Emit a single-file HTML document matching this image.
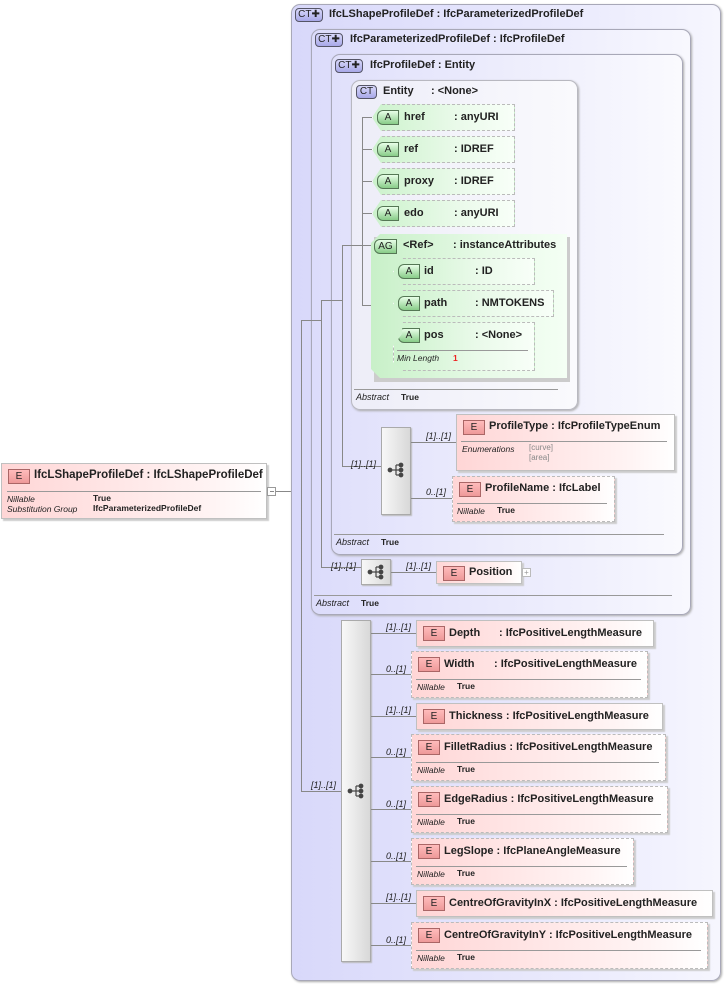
<!DOCTYPE html>
<html><head><meta charset="utf-8"><style>
*{box-sizing:border-box;margin:0;padding:0}
body{width:724px;height:984px;background:#fff;position:relative;overflow:hidden;font-family:"Liberation Sans",sans-serif;font-size:11px;color:#222}
div{position:absolute}
.ct{border:1px solid #a8a8b8;border-radius:9px;background:linear-gradient(90deg,#d8d8fa,#ececfd 70%,#f6f6fe);box-shadow:1px 1px 2px #aaa}
.ent{border:1px solid #b8b8c0;border-radius:9px;background:linear-gradient(90deg,#ededf8,#fafafd);box-shadow:1px 1px 2px #aaa}
.bdg{height:14px;border:1px solid #556;border-radius:4px;background:linear-gradient(#d8d8fa,#a8a8e8);font-size:10px;text-align:center;line-height:12px;font-weight:normal;color:#222}
.t{font-weight:bold;white-space:nowrap;font-size:11px}
.el{background:linear-gradient(90deg,#ffd6d6,#fff4f4 80%,#fff);border:1px solid #c0c0c0;box-shadow:2px 2px 1px #ccc}
.el.d{border:1px dashed #bbb}
.eb{left:6px;top:5px;width:22px;height:15px;border:1px solid #a66;background:linear-gradient(#fbb,#e99);font-size:10px;text-align:center;line-height:13px}
.sep{height:1px;background:#999}
.it{font-style:italic;font-size:8.5px}
.b8{font-weight:bold;font-size:8.5px}
.at{background:linear-gradient(90deg,#ccf2cc,#eafaea 60%,#f8fff8);border:1px dashed #bbb;box-shadow:1px 1px 1px #ddd;clip-path:polygon(9px 0,100% 0,100% 100%,9px 100%,0 50%);}
.ab{left:4px;top:5px;width:22px;height:15px;border:1px solid #575;border-radius:6px 0 0 6px;background:linear-gradient(#e8ffe8,#8c8);font-size:10px;text-align:center;line-height:13px}
.h{height:1px;background:#888}
.v{width:1px;background:#888}
.seq{border:1px solid #aaa;background:linear-gradient(90deg,#f8f8f8,#d8d8d8);box-shadow:1px 1px 1px #bbb}
.m{font-style:italic;font-size:9px}
</style></head><body>

<div class="el" style="left:1px;top:463px;width:266px;height:56px">
<div class="eb">E</div><div class="t" style="left:32px;top:5px;font-size:11.5px">IfcLShapeProfileDef : IfcLShapeProfileDef</div>
<div class="sep" style="left:5px;top:27px;width:254px"></div>
<div class="it" style="left:5px;top:30px">Nillable</div><div class="b8" style="left:91px;top:29px">True</div>
<div class="it" style="left:5px;top:40px">Substitution Group</div><div class="b8" style="left:91px;top:39px">IfcParameterizedProfileDef</div>
</div>
<div style="left:267px;top:487px;width:9px;height:9px;border:1px solid #999;background:#fff"></div>
<div class="h" style="left:270px;top:491px;width:4px"></div>
<div class="h" style="left:276px;top:491px;width:16px"></div>

<div class="ct" style="left:291px;top:4px;width:430px;height:977px"></div>
<div class="bdg" style="left:295px;top:8px;width:28px">CT✚</div>
<div class="t" style="left:329px;top:8px">IfcLShapeProfileDef : IfcParameterizedProfileDef</div>

<div class="ct" style="left:311px;top:29px;width:380px;height:586px;background:linear-gradient(90deg,#dcdcfb,#efeffd 70%,#f8f8fe)"></div>
<div class="bdg" style="left:315px;top:33px;width:28px">CT✚</div>
<div class="t" style="left:350px;top:33px">IfcParameterizedProfileDef : IfcProfileDef</div>
<div class="sep" style="left:314px;top:595px;width:358px"></div>
<div class="it" style="left:316px;top:598px;font-size:9px">Abstract</div><div class="b8" style="left:361px;top:598px">True</div>

<div class="ct" style="left:331px;top:54px;width:352px;height:501px;background:linear-gradient(90deg,#e0e0fb,#f2f2fd 70%,#fafafe)"></div>
<div class="bdg" style="left:335px;top:59px;width:28px">CT✚</div>
<div class="t" style="left:370px;top:59px">IfcProfileDef : Entity</div>
<div class="sep" style="left:334px;top:534px;width:330px"></div>
<div class="it" style="left:336px;top:537px;font-size:9px">Abstract</div><div class="b8" style="left:381px;top:537px">True</div>

<div class="ent" style="left:351px;top:80px;width:227px;height:330px"></div>
<div class="bdg" style="left:356px;top:85px;width:21px">CT</div>
<div class="t" style="left:383px;top:85px">Entity</div><div class="t" style="left:431px;top:85px">: &lt;None&gt;</div>
<div class="sep" style="left:354px;top:389px;width:204px"></div>
<div class="it" style="left:356px;top:392px;font-size:9px">Abstract</div><div class="b8" style="left:401px;top:392px">True</div>

<div class="v" style="left:301px;top:320px;height:472px"></div>
<div class="h" style="left:301px;top:320px;width:21px"></div>
<div class="v" style="left:321px;top:300px;height:268px"></div>
<div class="h" style="left:321px;top:300px;width:21px"></div>
<div class="v" style="left:342px;top:245px;height:221px"></div>
<div class="h" style="left:342px;top:245px;width:30px"></div>
<div class="v" style="left:362px;top:117px;height:188px"></div>
<div class="h" style="left:362px;top:117px;width:10px"></div>
<div class="h" style="left:362px;top:149px;width:10px"></div>
<div class="h" style="left:362px;top:181px;width:10px"></div>
<div class="h" style="left:362px;top:213px;width:10px"></div>
<div class="h" style="left:362px;top:305px;width:31px"></div>
<div class="v" style="left:381px;top:271px;height:76px"></div>
<div class="h" style="left:381px;top:271px;width:12px"></div>
<div class="h" style="left:381px;top:346px;width:12px"></div>
<div class="h" style="left:342px;top:466px;width:39px"></div>
<div class="h" style="left:321px;top:567px;width:40px"></div>
<div class="h" style="left:301px;top:791px;width:40px"></div>

<div class="at" style="left:372px;top:104px;width:143px;height:27px"><div class="ab">A</div><div class="t" style="left:31px;top:6px">href</div><div class="t" style="left:81px;top:6px">: anyURI</div></div>
<div class="at" style="left:372px;top:136px;width:143px;height:27px"><div class="ab">A</div><div class="t" style="left:31px;top:6px">ref</div><div class="t" style="left:81px;top:6px">: IDREF</div></div>
<div class="at" style="left:372px;top:168px;width:143px;height:27px"><div class="ab">A</div><div class="t" style="left:31px;top:6px">proxy</div><div class="t" style="left:81px;top:6px">: IDREF</div></div>
<div class="at" style="left:372px;top:200px;width:143px;height:27px"><div class="ab">A</div><div class="t" style="left:31px;top:6px">edo</div><div class="t" style="left:81px;top:6px">: anyURI</div></div>

<div style="left:374px;top:237px;width:196px;height:145px;background:#ccc"></div>
<div style="left:371px;top:234px;width:196px;height:144px;background:linear-gradient(90deg,#c8f0c8,#e8fae8 60%,#f4fff4);clip-path:polygon(9px 0,100% 0,100% 100%,9px 100%,0 calc(100% - 9px),0 9px)"></div>
<div class="ab" style="left:374px;top:239px;width:23px">AG</div>
<div class="t" style="left:403px;top:239px">&lt;Ref&gt;</div><div class="t" style="left:453px;top:239px">: instanceAttributes</div>
<div class="at" style="left:393px;top:258px;width:142px;height:27px"><div class="ab">A</div><div class="t" style="left:30px;top:6px">id</div><div class="t" style="left:81px;top:6px">: ID</div></div>
<div class="at" style="left:393px;top:290px;width:161px;height:27px"><div class="ab">A</div><div class="t" style="left:30px;top:6px">path</div><div class="t" style="left:81px;top:6px">: NMTOKENS</div></div>
<div class="at" style="left:393px;top:322px;width:142px;height:49px;clip-path:polygon(9px 0,100% 0,100% 100%,9px 100%,0 calc(100% - 9px),0 24px,9px 12px)"><div class="ab">A</div><div class="t" style="left:30px;top:6px">pos</div><div class="t" style="left:81px;top:6px">: &lt;None&gt;</div>
<div class="sep" style="left:3px;top:27px;width:131px"></div><div class="it" style="left:3px;top:30px">Min Length</div><div class="b8" style="left:59px;top:30px;color:#e22">1</div></div>

<div class="seq" style="left:381px;top:427px;width:30px;height:88px"></div>
<div class="m" style="left:351px;top:459px">[1]..[1]</div>
<div class="h" style="left:411px;top:442px;width:45px"></div>
<div class="h" style="left:411px;top:498px;width:41px"></div>
<div class="m" style="left:426px;top:431px">[1]..[1]</div>
<div class="m" style="left:426px;top:487px">0..[1]</div>
<div class="el" style="left:456px;top:414px;width:219px;height:57px"><div class="eb">E</div><div class="t" style="left:32px;top:5px">ProfileType : IfcProfileTypeEnum</div>
<div class="sep" style="left:4px;top:26px;width:206px"></div><div class="it" style="left:5px;top:29px">Enumerations</div><div style="left:72px;top:28px;font-size:8px;color:#888;line-height:10px">[curve]<br>[area]</div></div>
<div class="el d" style="left:452px;top:476px;width:163px;height:46px"><div class="eb">E</div><div class="t" style="left:32px;top:5px">ProfileName : IfcLabel</div>
<div class="sep" style="left:4px;top:26px;width:150px"></div><div class="it" style="left:4px;top:29px">Nillable</div><div class="b8" style="left:44px;top:28px">True</div></div>

<div class="seq" style="left:361px;top:559px;width:30px;height:26px"></div>
<div class="m" style="left:331px;top:561px">[1]..[1]</div>
<div class="h" style="left:391px;top:572px;width:45px"></div>
<div class="m" style="left:406px;top:561px">[1]..[1]</div>
<div class="el" style="left:436px;top:561px;width:86px;height:23px"><div class="eb" style="top:4px">E</div><div class="t" style="left:32px;top:4px">Position</div></div>
<div style="left:522px;top:568px;width:9px;height:9px;border:1px solid #bbb;background:#fff;font-size:8px;line-height:7px;text-align:center;color:#999">+</div>

<div class="seq" style="left:341px;top:620px;width:30px;height:342px"></div>
<div class="m" style="left:311px;top:780px">[1]..[1]</div>
<div class="h" style="left:371px;top:633px;width:45px"></div>
<div class="h" style="left:371px;top:674px;width:40px"></div>
<div class="h" style="left:371px;top:716px;width:45px"></div>
<div class="h" style="left:371px;top:757px;width:40px"></div>
<div class="h" style="left:371px;top:809px;width:40px"></div>
<div class="h" style="left:371px;top:861px;width:40px"></div>
<div class="h" style="left:371px;top:903px;width:45px"></div>
<div class="h" style="left:371px;top:945px;width:40px"></div>
<div class="m" style="left:386px;top:622px">[1]..[1]</div>
<div class="m" style="left:386px;top:664px">0..[1]</div>
<div class="m" style="left:386px;top:705px">[1]..[1]</div>
<div class="m" style="left:386px;top:747px">0..[1]</div>
<div class="m" style="left:386px;top:799px">0..[1]</div>
<div class="m" style="left:386px;top:851px">0..[1]</div>
<div class="m" style="left:386px;top:892px">[1]..[1]</div>
<div class="m" style="left:386px;top:935px">0..[1]</div>

<div class="el" style="left:416px;top:620px;width:238px;height:27px"><div class="eb">E</div><div class="t" style="left:32px;top:6px">Depth</div><div class="t" style="left:82px;top:6px">: IfcPositiveLengthMeasure</div></div>
<div class="el d" style="left:411px;top:651px;width:237px;height:47px"><div class="eb">E</div><div class="t" style="left:32px;top:6px">Width</div><div class="t" style="left:82px;top:6px">: IfcPositiveLengthMeasure</div><div class="sep" style="left:4px;top:27px;width:225px"></div><div class="it" style="left:5px;top:30px">Nillable</div><div class="b8" style="left:45px;top:29px">True</div></div>
<div class="el" style="left:416px;top:703px;width:247px;height:27px"><div class="eb">E</div><div class="t" style="left:32px;top:6px">Thickness : IfcPositiveLengthMeasure</div></div>
<div class="el d" style="left:411px;top:734px;width:255px;height:47px"><div class="eb">E</div><div class="t" style="left:32px;top:6px">FilletRadius : IfcPositiveLengthMeasure</div><div class="sep" style="left:4px;top:27px;width:243px"></div><div class="it" style="left:5px;top:30px">Nillable</div><div class="b8" style="left:45px;top:29px">True</div></div>
<div class="el d" style="left:411px;top:786px;width:257px;height:47px"><div class="eb">E</div><div class="t" style="left:32px;top:6px">EdgeRadius : IfcPositiveLengthMeasure</div><div class="sep" style="left:4px;top:27px;width:245px"></div><div class="it" style="left:5px;top:30px">Nillable</div><div class="b8" style="left:45px;top:29px">True</div></div>
<div class="el d" style="left:411px;top:838px;width:223px;height:47px"><div class="eb">E</div><div class="t" style="left:32px;top:6px">LegSlope : IfcPlaneAngleMeasure</div><div class="sep" style="left:4px;top:27px;width:211px"></div><div class="it" style="left:5px;top:30px">Nillable</div><div class="b8" style="left:45px;top:29px">True</div></div>
<div class="el" style="left:416px;top:890px;width:297px;height:27px"><div class="eb">E</div><div class="t" style="left:32px;top:6px">CentreOfGravityInX : IfcPositiveLengthMeasure</div></div>
<div class="el d" style="left:411px;top:922px;width:297px;height:47px"><div class="eb">E</div><div class="t" style="left:32px;top:6px">CentreOfGravityInY : IfcPositiveLengthMeasure</div><div class="sep" style="left:4px;top:27px;width:285px"></div><div class="it" style="left:5px;top:30px">Nillable</div><div class="b8" style="left:45px;top:29px">True</div></div>

<svg style="position:absolute;left:0;top:0" width="724" height="984">
<g fill="#444" stroke="#444" stroke-width="1.2">
<g transform="translate(388,463)"><circle cx="2" cy="7" r="1.8"/><line x1="2" y1="7" x2="8" y2="7"/><line x1="8" y1="2" x2="8" y2="12"/><line x1="8" y1="2" x2="12" y2="2"/><line x1="8" y1="7" x2="12" y2="7"/><line x1="8" y1="12" x2="12" y2="12"/><circle cx="13" cy="2" r="1.8"/><circle cx="13" cy="7" r="1.8"/><circle cx="13" cy="12" r="1.8"/></g>
<g transform="translate(368,565)"><circle cx="2" cy="7" r="1.8"/><line x1="2" y1="7" x2="8" y2="7"/><line x1="8" y1="2" x2="8" y2="12"/><line x1="8" y1="2" x2="12" y2="2"/><line x1="8" y1="7" x2="12" y2="7"/><line x1="8" y1="12" x2="12" y2="12"/><circle cx="13" cy="2" r="1.8"/><circle cx="13" cy="7" r="1.8"/><circle cx="13" cy="12" r="1.8"/></g>
<g transform="translate(348,784)"><circle cx="2" cy="7" r="1.8"/><line x1="2" y1="7" x2="8" y2="7"/><line x1="8" y1="2" x2="8" y2="12"/><line x1="8" y1="2" x2="12" y2="2"/><line x1="8" y1="7" x2="12" y2="7"/><line x1="8" y1="12" x2="12" y2="12"/><circle cx="13" cy="2" r="1.8"/><circle cx="13" cy="7" r="1.8"/><circle cx="13" cy="12" r="1.8"/></g>
</g></svg>
</body></html>
